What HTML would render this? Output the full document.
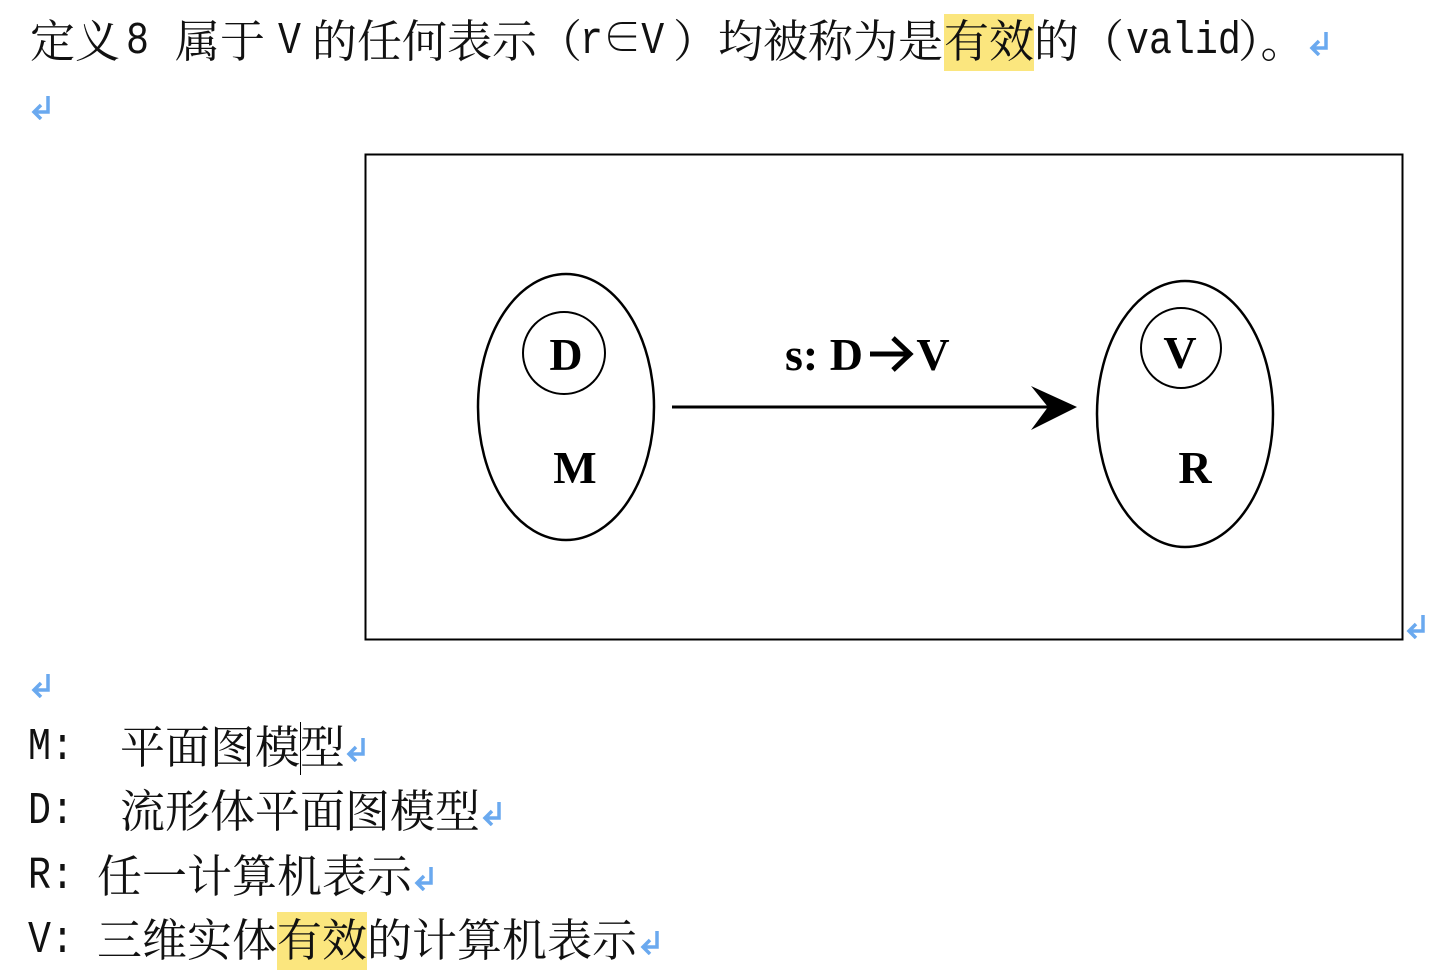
<!DOCTYPE html>
<html><head><meta charset="utf-8"><style>
html,body{margin:0;padding:0;background:#fff;width:1452px;height:978px;overflow:hidden;position:relative}
.t{position:absolute;font-family:"Liberation Serif","Noto Serif CJK SC",serif;font-size:45px;line-height:58px;color:#111;white-space:pre}
.m{font-family:"Liberation Mono","Noto Serif CJK SC",monospace;transform:scaleX(0.85);transform-origin:left}
.hl{position:absolute;background:#fbe67e}
.r{position:absolute;width:22px;height:26px}
</style></head><body>
<svg width="0" height="0" style="position:absolute"><defs><symbol id="ret" viewBox="0 0 22 26"><path d="M18 2 V18 H5 M11 11 L4 18 L11 25" fill="none" stroke="#6aa9ef" stroke-width="3.5"/></symbol></defs></svg>
<div class="hl" style="left:944px;top:14px;width:90px;height:57px"></div>
<div class="hl" style="left:277px;top:912px;width:90px;height:58px"></div>

<div class="t" style="left:30px;top:13px">定义</div>
<div class="t m" style="left:126px;top:13px">8</div>
<div class="t" style="left:175px;top:13px">属于</div>
<div class="t m" style="left:278px;top:13px">V</div>
<div class="t" style="left:312px;top:13px">的任何表示（</div>
<div class="t m" style="left:580px;top:13px">r∈V</div>
<div class="t" style="left:673px;top:13px">）均被称为是</div>
<div class="t" style="left:944px;top:13px">有效的（</div>
<div class="t m" style="left:1126px;top:13px">valid</div>
<div class="t" style="left:1238px;top:13px">）。</div>
<svg class="r" style="left:1308px;top:30px"><use href="#ret"/></svg>
<svg class="r" style="left:30px;top:94px"><use href="#ret"/></svg>

<svg style="position:absolute;left:0;top:0" width="1452" height="978">
<rect x="365.5" y="154.5" width="1037" height="485" fill="none" stroke="#000" stroke-width="2"/>
<ellipse cx="566" cy="407" rx="88" ry="133" fill="none" stroke="#000" stroke-width="2.5"/>
<circle cx="564" cy="353" r="41" fill="none" stroke="#000" stroke-width="2"/>
<ellipse cx="1185" cy="414" rx="88" ry="133" fill="none" stroke="#000" stroke-width="2.5"/>
<circle cx="1181" cy="348" r="40" fill="none" stroke="#000" stroke-width="2"/>
<line x1="672" y1="407" x2="1060" y2="407" stroke="#000" stroke-width="3"/>
<polygon points="1077,407 1031,386 1048,407 1031,430" fill="#000"/>
<g font-family="Liberation Serif,serif" font-weight="bold" fill="#000" text-anchor="middle">
<text x="566" y="370" font-size="46">D</text>
<text x="575" y="483" font-size="46">M</text>
<text x="1180" y="368" font-size="46">V</text>
<text x="1195" y="483" font-size="46">R</text>
<text x="824" y="370" font-size="46">s: D</text>
<text x="933" y="370" font-size="46">V</text>
</g>
<path d="M870 354 H908 M893 338 L910 354 L893 370" fill="none" stroke="#000" stroke-width="5"/>
</svg>
<svg class="r" style="left:1405px;top:613px"><use href="#ret"/></svg>
<svg class="r" style="left:30px;top:672px"><use href="#ret"/></svg>

<div class="t m" style="left:28px;top:719px">M:</div>
<div class="t" style="left:120px;top:719px">平面图模型</div>
<div style="position:absolute;left:300px;top:722px;width:1px;height:53px;background:#000"></div>
<svg class="r" style="left:345px;top:736px"><use href="#ret"/></svg>

<div class="t m" style="left:28px;top:783px">D:</div>
<div class="t" style="left:120px;top:783px">流形体平面图模型</div>
<svg class="r" style="left:481px;top:800px"><use href="#ret"/></svg>

<div class="t m" style="left:28px;top:848px">R:</div>
<div class="t" style="left:97px;top:848px">任一计算机表示</div>
<svg class="r" style="left:413px;top:865px"><use href="#ret"/></svg>

<div class="t m" style="left:28px;top:912px">V:</div>
<div class="t" style="left:97px;top:912px">三维实体有效的计算机表示</div>
<svg class="r" style="left:639px;top:929px"><use href="#ret"/></svg>
</body></html>
